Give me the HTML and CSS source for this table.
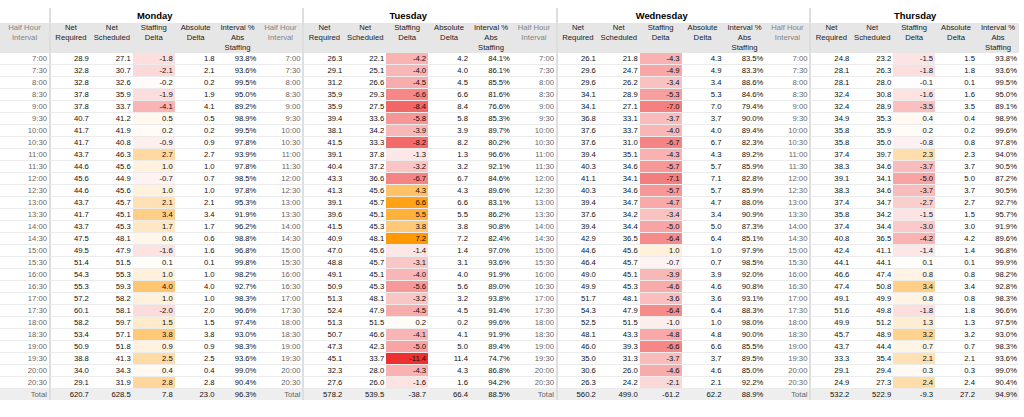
FILE: index.html
```html
<!DOCTYPE html>
<html lang="en">
<head>
<meta charset="utf-8">
<title>Staffing by half hour</title>
<link rel="stylesheet" href="styles.css">
</head>
<body>
<table class="grid" id="grid"></table>
<script src="script.js"></script>
</body>
</html>
```

FILE: styles.css
```css
* { box-sizing: border-box; }
html, body { margin: 0; background: #fff; }
body {
  font-family: "Liberation Sans", Arial, sans-serif;
  color: #111;
}
.grid {
  border-collapse: separate;
  border-spacing: 0;
  table-layout: fixed;
  width: 1019px;
  margin-top: 8px;
  font-size: 7.7px;
}
.grid col.c-time { width: 44px; }
.grid col.c-first { width: 49px; }
.grid col.c-val { width: 41.9px; }

.grid th, .grid td {
  padding: 0 2px;
  white-space: nowrap;
  overflow: hidden;
}
.grid td {
  text-align: right;
  line-height: 11px;
  border-bottom: 1px solid #ebebeb;
  color: #111;
}
.grid td.t { color: #666; }
.grid .g { border-left: 2px solid #dedede; }

.title th {
  height: 15px;
  line-height: 15px;
  font-size: 9.4px;
  font-weight: bold;
  color: #000;
  text-align: center;
  padding: 0;
}
.head th {
  background: #e6e6e6;
  height: 30px;
  line-height: 10px;
  vertical-align: top;
  font-weight: normal;
  text-align: center;
  color: #222;
  padding: 0;
}
.head th.t { color: #858585; }
.total td {
  background: #eeeeee;
  border-bottom: 0;
}
```

FILE: script.js
```js
const DAYS = [
  { name: "Monday", total: "620.7 628.5 7.8 23.0 96.3%", rows: `
7:00 28.9 27.1 -1.8 1.8 93.8%
7:30 32.8 30.7 -2.1 2.1 93.6%
8:00 32.8 32.6 -0.2 0.2 99.5%
8:30 37.8 35.9 -1.9 1.9 95.0%
9:00 37.8 33.7 -4.1 4.1 89.2%
9:30 40.7 41.2 0.5 0.5 98.9%
10:00 41.7 41.9 0.2 0.2 99.5%
10:30 41.7 40.8 -0.9 0.9 97.8%
11:00 43.7 46.3 2.7 2.7 93.9%
11:30 44.6 45.6 1.0 1.0 97.8%
12:00 45.6 44.9 -0.7 0.7 98.5%
12:30 44.6 45.6 1.0 1.0 97.8%
13:00 43.7 45.7 2.1 2.1 95.3%
13:30 41.7 45.1 3.4 3.4 91.9%
14:00 43.7 45.3 1.7 1.7 96.2%
14:30 47.5 48.1 0.6 0.6 98.8%
15:00 49.5 47.9 -1.6 1.6 96.8%
15:30 51.4 51.5 0.1 0.1 99.8%
16:00 54.3 55.3 1.0 1.0 98.2%
16:30 55.3 59.3 4.0 4.0 92.7%
17:00 57.2 58.2 1.0 1.0 98.3%
17:30 60.1 58.1 -2.0 2.0 96.6%
18:00 58.2 59.7 1.5 1.5 97.4%
18:30 53.4 57.1 3.8 3.8 93.0%
19:00 50.9 51.8 0.9 0.9 98.3%
19:30 38.8 41.3 2.5 2.5 93.6%
20:00 34.0 34.3 0.4 0.4 99.0%
20:30 29.1 31.9 2.8 2.8 90.4%` },
  { name: "Tuesday", total: "578.2 539.5 -38.7 66.4 88.5%", rows: `
7:00 26.3 22.1 -4.2 4.2 84.1%
7:30 29.1 25.1 -4.0 4.0 86.1%
8:00 31.2 26.6 -4.5 4.5 85.5%
8:30 35.9 29.3 -6.6 6.6 81.6%
9:00 35.9 27.5 -8.4 8.4 76.6%
9:30 39.4 33.6 -5.8 5.8 85.3%
10:00 38.1 34.2 -3.9 3.9 89.7%
10:30 41.5 33.3 -8.2 8.2 80.2%
11:00 39.1 37.8 -1.3 1.3 96.6%
11:30 40.4 37.2 -3.2 3.2 92.1%
12:00 43.3 36.6 -6.7 6.7 84.6%
12:30 41.3 45.6 4.3 4.3 89.6%
13:00 39.1 45.7 6.6 6.6 83.1%
13:30 39.6 45.1 5.5 5.5 86.2%
14:00 41.5 45.3 3.8 3.8 90.8%
14:30 40.9 48.1 7.2 7.2 82.4%
15:00 47.0 45.6 -1.4 1.4 97.0%
15:30 48.8 45.7 -3.1 3.1 93.6%
16:00 49.1 45.1 -4.0 4.0 91.9%
16:30 50.9 45.3 -5.6 5.6 89.0%
17:00 51.3 48.1 -3.2 3.2 93.8%
17:30 52.4 47.9 -4.5 4.5 91.4%
18:00 51.3 51.5 0.2 0.2 99.6%
18:30 50.7 46.6 -4.1 4.1 91.9%
19:00 47.3 42.3 -5.0 5.0 89.4%
19:30 45.1 33.7 -11.4 11.4 74.7%
20:00 32.3 28.0 -4.3 4.3 86.8%
20:30 27.6 26.0 -1.6 1.6 94.2%` },
  { name: "Wednesday", total: "560.2 499.0 -61.2 62.2 88.9%", rows: `
7:00 26.1 21.8 -4.3 4.3 83.5%
7:30 29.6 24.7 -4.9 4.9 83.3%
8:00 29.6 26.2 -3.4 3.4 88.6%
8:30 34.1 28.9 -5.3 5.3 84.6%
9:00 34.1 27.1 -7.0 7.0 79.4%
9:30 36.8 33.1 -3.7 3.7 90.0%
10:00 37.6 33.7 -4.0 4.0 89.4%
10:30 37.6 31.0 -6.7 6.7 82.3%
11:00 39.4 35.1 -4.3 4.3 89.2%
11:30 40.3 34.6 -5.7 5.7 85.9%
12:00 41.1 34.1 -7.1 7.1 82.8%
12:30 40.3 34.6 -5.7 5.7 85.9%
13:00 39.4 34.7 -4.7 4.7 88.0%
13:30 37.6 34.2 -3.4 3.4 90.9%
14:00 39.4 34.4 -5.0 5.0 87.3%
14:30 42.9 36.5 -6.4 6.4 85.1%
15:00 44.6 45.6 1.0 1.0 97.9%
15:30 46.4 45.7 -0.7 0.7 98.5%
16:00 49.0 45.1 -3.9 3.9 92.0%
16:30 49.9 45.3 -4.6 4.6 90.8%
17:00 51.7 48.1 -3.6 3.6 93.1%
17:30 54.3 47.9 -6.4 6.4 88.3%
18:00 52.5 51.5 -1.0 1.0 98.0%
18:30 48.1 43.3 -4.8 4.8 90.0%
19:00 46.0 39.3 -6.6 6.6 85.5%
19:30 35.0 31.3 -3.7 3.7 89.5%
20:00 30.6 26.0 -4.6 4.6 85.0%
20:30 26.3 24.2 -2.1 2.1 92.2%` },
  { name: "Thursday", total: "532.2 522.9 -9.3 27.2 94.9%", rows: `
7:00 24.8 23.2 -1.5 1.5 93.8%
7:30 28.1 26.3 -1.8 1.8 93.6%
8:00 28.1 28.0 -0.1 0.1 99.5%
8:30 32.4 30.8 -1.6 1.6 95.0%
9:00 32.4 28.9 -3.5 3.5 89.1%
9:30 34.9 35.3 0.4 0.4 98.9%
10:00 35.8 35.9 0.2 0.2 99.6%
10:30 35.8 35.0 -0.8 0.8 97.8%
11:00 37.4 39.7 2.3 2.3 94.0%
11:30 38.3 34.6 -3.7 3.7 90.5%
12:00 39.1 34.1 -5.0 5.0 87.2%
12:30 38.3 34.6 -3.7 3.7 90.5%
13:00 37.4 34.7 -2.7 2.7 92.7%
13:30 35.8 34.2 -1.5 1.5 95.7%
14:00 37.4 34.4 -3.0 3.0 91.9%
14:30 40.8 36.5 -4.2 4.2 89.6%
15:00 42.4 41.1 -1.4 1.4 96.8%
15:30 44.1 44.1 0.1 0.1 99.9%
16:00 46.6 47.4 0.8 0.8 98.2%
16:30 47.4 50.8 3.4 3.4 92.8%
17:00 49.1 49.9 0.8 0.8 98.3%
17:30 51.6 49.8 -1.8 1.8 96.6%
18:00 49.9 51.2 1.3 1.3 97.5%
18:30 45.7 48.9 3.2 3.2 93.0%
19:00 43.7 44.4 0.7 0.7 98.3%
19:30 33.3 35.4 2.1 2.1 93.6%
20:00 29.1 29.4 0.3 0.3 99.0%
20:30 24.9 27.3 2.4 2.4 90.4%` }
];

const HEAD = ["Net<br>Required", "Net<br>Scheduled", "Staffing<br>Delta", "Absolute<br>Delta", "Interval %<br>Abs<br>Staffing"];

function parse(block) {
  return block.trim().split("\n").map(function (l) { return l.trim().split(/\s+/); });
}

function heat(v) {
  const neg = v < 0;
  const t = Math.min(1, Math.abs(v) / (neg ? 11.4 : 7.2));
  const to = neg ? [238, 48, 48] : [255, 153, 0];
  const c = to.map(function (x) { return Math.round(255 + (x - 255) * t); });
  return "rgb(" + c.join(",") + ")";
}

let html = "<colgroup>";
DAYS.forEach(function (d, i) {
  html += '<col class="c-time' + (i === 0 ? ' c-first' : '') + '">' + '<col class="c-val">'.repeat(5);
});
html += "</colgroup><thead><tr class=\"title\">";
DAYS.forEach(function (d) {
  html += '<th class="t"></th><th class="g" colspan="5">' + d.name + "</th>";
});
html += "</tr><tr class=\"head\">";
DAYS.forEach(function () {
  html += '<th class="t">Half Hour<br>Interval</th>';
  HEAD.forEach(function (h, j) {
    html += "<th" + (j === 0 ? ' class="g"' : "") + ">" + h + "</th>";
  });
});
html += "</tr></thead><tbody>";

const parsed = DAYS.map(function (d) { return parse(d.rows); });
for (let r = 0; r < parsed[0].length; r++) {
  html += "<tr>";
  parsed.forEach(function (rows) {
    const c = rows[r];
    html += '<td class="t">' + c[0] + '</td><td class="g">' + c[1] + "</td><td>" + c[2] +
      '</td><td class="heat" style="background:' + heat(parseFloat(c[3])) + '">' + c[3] +
      "</td><td>" + c[4] + "</td><td>" + c[5] + "</td>";
  });
  html += "</tr>";
}
html += "</tbody><tfoot><tr class=\"total\">";
DAYS.forEach(function (d) {
  const c = d.total.split(" ");
  html += '<td class="t">Total</td><td class="g">' + c[0] + "</td><td>" + c[1] + "</td><td>" + c[2] +
    "</td><td>" + c[3] + "</td><td>" + c[4] + "</td>";
});
html += "</tr></tfoot>";

document.getElementById("grid").innerHTML = html;
```
